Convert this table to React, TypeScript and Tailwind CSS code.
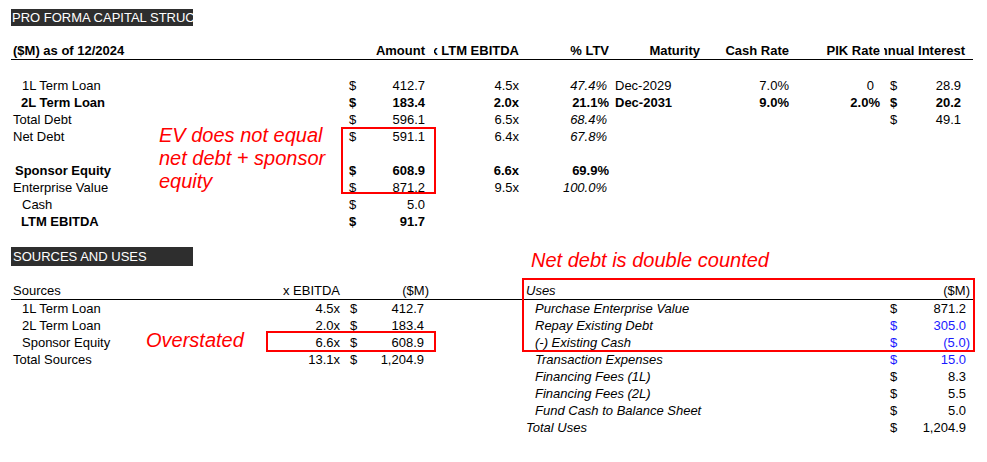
import React from 'react';

type CapRow = {
  label?: string;
  pad?: string;
  bold?: boolean;
  amt?: string;
  mult?: string;
  ltv?: string;
  mat?: string;
  cash?: string;
  pik?: string;
  pikPad?: string;
  int?: string;
};

type UseRow = {
  label: string;
  amt: string;
  blue?: boolean;
  neg?: boolean;
  total?: boolean;
};

const topCols = 'grid grid-cols-[330px_93px_90px_88px_93px_88px_91px_89px] h-[17px]';
const suCols = 'grid grid-cols-[255px_78px_86px_92px_362px_89px] h-[17px]';

const capRows: CapRow[] = [
  { label: '1L Term Loan', pad: 'pl-[11px]', amt: '412.7', mult: '4.5x', ltv: '47.4%', mat: 'Dec-2029', cash: '7.0%', pik: '0', pikPad: 'pr-[10px]', int: '28.9' },
  { label: '2L Term Loan', pad: 'pl-[10px]', bold: true, amt: '183.4', mult: '2.0x', ltv: '21.1%', mat: 'Dec-2031', cash: '9.0%', pik: '2.0%', pikPad: 'pr-[4px]', int: '20.2' },
  { label: 'Total Debt', pad: 'pl-[2px]', amt: '596.1', mult: '6.5x', ltv: '68.4%', int: '49.1' },
  { label: 'Net Debt', pad: 'pl-[2px]', amt: '591.1', mult: '6.4x', ltv: '67.8%' },
  {},
  { label: 'Sponsor Equity', pad: 'pl-[4px]', bold: true, amt: '608.9', mult: '6.6x', ltv: '69.9%' },
  { label: 'Enterprise Value', pad: 'pl-[2px]', amt: '871.2', mult: '9.5x', ltv: '100.0%' },
  { label: 'Cash', pad: 'pl-[11px]', amt: '5.0' },
  { label: 'LTM EBITDA', pad: 'pl-[10px]', bold: true, amt: '91.7' },
];

const sources = [
  { label: '1L Term Loan', mult: '4.5x', amt: '412.7', total: false },
  { label: '2L Term Loan', mult: '2.0x', amt: '183.4', total: false },
  { label: 'Sponsor Equity', mult: '6.6x', amt: '608.9', total: false },
  { label: 'Total Sources', mult: '13.1x', amt: '1,204.9', total: true },
];

const uses: UseRow[] = [
  { label: 'Purchase Enterprise Value', amt: '871.2' },
  { label: 'Repay Existing Debt', amt: '305.0', blue: true },
  { label: '(-) Existing Cash', amt: '(5.0)', blue: true, neg: true },
  { label: 'Transaction Expenses', amt: '15.0', blue: true },
  { label: 'Financing Fees (1L)', amt: '8.3' },
  { label: 'Financing Fees (2L)', amt: '5.5' },
  { label: 'Fund Cash to Balance Sheet', amt: '5.0' },
  { label: 'Total Uses', amt: '1,204.9', total: true },
];

function SectionBar({ title, tall }: { title: string; tall?: boolean }) {
  return (
    <div
      className={
        tall
          ? 'w-[182px] h-[19px] leading-[19px] bg-[#2e2e2e] text-white pl-[2px] whitespace-nowrap'
          : 'w-[182px] h-[17px] leading-[17px] bg-[#2e2e2e] text-white pl-[1px] whitespace-nowrap'
      }
    >
      {title}
    </div>
  );
}

function Dollar({ value, cls }: { value?: string; cls: string }) {
  if (!value) return <div />;
  return (
    <div className={`flex justify-between ${cls}`}>
      <span>$</span>
      <span>{value}</span>
    </div>
  );
}

export default function App() {
  return (
    <div className="relative w-[987px] h-[462px] overflow-hidden bg-white pl-[11px] pt-[9px] font-['Liberation_Sans',Arial,sans-serif] text-[13px] leading-[17px] text-black">
      <SectionBar title="PRO FORMA CAPITAL STRUCTURE" />

      {/* capital structure table */}
      <div className="mt-[16px] w-[962px]">
        <div className={`${topCols} box-content border-b border-black font-bold whitespace-nowrap`}>
          <div className="pl-[2px]">($M) as of 12/2024</div>
          <div className="text-right pr-[9px]">Amount</div>
          <div className="flex justify-end overflow-hidden pr-[5px]">x LTM EBITDA</div>
          <div className="text-right pr-[3px]">% LTV</div>
          <div className="text-right pr-[5px]">Maturity</div>
          <div className="text-right pr-[4px]">Cash Rate</div>
          <div className="text-right pr-[4px]">PIK Rate</div>
          <div className="flex justify-end overflow-hidden pr-[8px]">Annual Interest</div>
        </div>
        <div className="h-[17px]" />
        {capRows.map((r, i) => (
          <div key={i} className={`${topCols} whitespace-nowrap ${r.bold ? 'font-bold' : ''}`}>
            <div className={r.pad}>{r.label}</div>
            <Dollar value={r.amt} cls="pl-[8px] pr-[9px]" />
            <div className="text-right pr-[5px]">{r.mult}</div>
            <div className={r.bold ? 'text-right pr-[3px]' : 'text-right pr-[5px] italic'}>{r.ltv}</div>
            <div className="pl-[3px]">{r.mat}</div>
            <div className="text-right pr-[4px]">{r.cash}</div>
            <div className={`text-right ${r.pikPad ?? ''}`}>{r.pik}</div>
            <Dollar value={r.int} cls="pl-[6px] pr-[12px]" />
          </div>
        ))}
      </div>

      <div className="mt-[17px]">
        <SectionBar title="SOURCES AND USES" tall />
      </div>

      {/* sources and uses */}
      <div className="mt-[16px] w-[962px]">
        <div className={`${suCols} box-content border-b border-black whitespace-nowrap`}>
          <div className="pl-[2px]">Sources</div>
          <div className="text-right pr-[4px]">x EBITDA</div>
          <div className="text-right pr-[1px]">($M)</div>
          <div />
          <div className="pl-[4px] italic">Uses</div>
          <div className="text-right pr-[3px]">($M)</div>
        </div>
        {uses.map((u, i) => {
          const s = sources[i];
          return (
            <div key={i} className={`${suCols} whitespace-nowrap`}>
              <div className={s ? (s.total ? 'pl-[2px]' : 'pl-[11px]') : ''}>{s?.label}</div>
              <div className="text-right pr-[4px]">{s?.mult}</div>
              <Dollar value={s?.amt} cls="pl-[6px] pr-[6px]" />
              <div />
              <div className={`italic ${u.total ? 'pl-[4px]' : 'pl-[13px]'}`}>{u.label}</div>
              <div className={`flex justify-between pl-[6px] ${u.neg ? 'pr-[3px]' : 'pr-[7px]'} ${u.blue ? 'text-[#1a1aff]' : ''}`}>
                <span>$</span>
                <span>{u.amt}</span>
              </div>
            </div>
          );
        })}
      </div>

      {/* review marks */}
      <div className="absolute left-[341px] top-[127px] w-[95px] h-[67px] border-2 border-[#ff0000]" />
      <div className="absolute left-[266px] top-[331px] w-[170px] h-[21px] border-2 border-[#ff0000]" />
      <div className="absolute left-[522px] top-[278px] w-[453px] h-[74px] border-2 border-[#ff0000]" />

      <div className="absolute left-[159px] top-[124px] text-[20px] leading-[23px] italic text-[#ff0000]">
        EV does not equal
        <br />
        net debt + sponsor
        <br />
        equity
      </div>
      <div className="absolute left-[146px] top-[329px] text-[20px] leading-[23px] italic text-[#ff0000] whitespace-nowrap">
        Overstated
      </div>
      <div className="absolute left-[531px] top-[249px] text-[20px] leading-[23px] italic text-[#ff0000] whitespace-nowrap">
        Net debt is double counted
      </div>
    </div>
  );
}
